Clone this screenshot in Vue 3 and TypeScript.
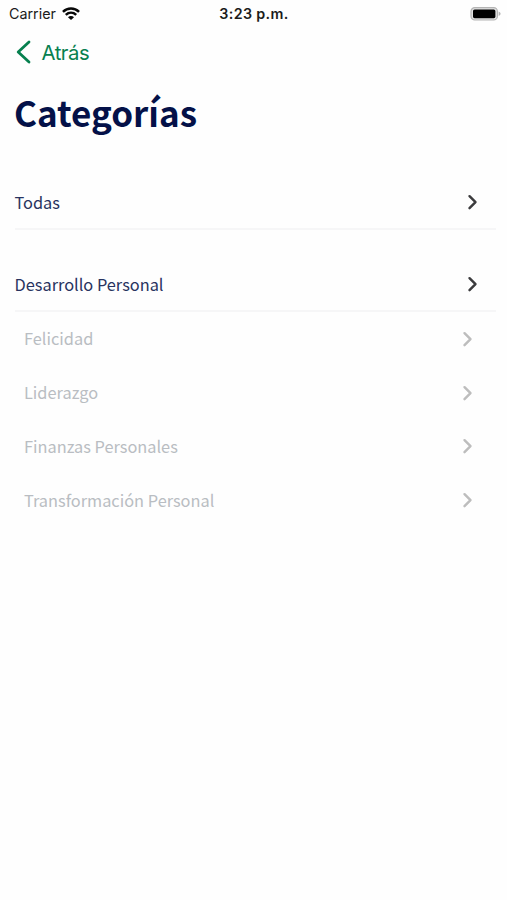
<script setup lang="ts">
interface Category {
  name: string
  kind: 'all' | 'parent' | 'child'
}

const categories: Category[] = [
  { name: 'Todas', kind: 'all' },
  { name: 'Desarrollo Personal', kind: 'parent' },
  { name: 'Felicidad', kind: 'child' },
  { name: 'Liderazgo', kind: 'child' },
  { name: 'Finanzas Personales', kind: 'child' },
  { name: 'Transformación Personal', kind: 'child' },
]
</script>

<template>
  <main class="screen">
    <header class="status">
      <div class="carrier">
        <span>Carrier</span>
        <svg class="wifi" width="18" height="14" viewBox="0 0 19 14" fill="none" stroke="#080808" stroke-width="2.6">
          <path d="M1 4.8C5.8.1 13.2.1 18 4.8" />
          <path d="M4 8c3.2-3 7.8-3 11 0" />
          <path d="M9.5 13.4 6.3 10.3c1.8-1.7 4.6-1.7 6.4 0z" fill="#080808" stroke="none" />
        </svg>
      </div>
      <span class="time">3:23 p.m.</span>
      <div class="power">
        <svg width="32" height="14" viewBox="0 0 32 14">
          <rect x="1" y=".6" width="26.4" height="12.4" rx="3.8" fill="#e2e2e2" stroke="#b4b4b4" stroke-width="1.2" />
          <rect x="3" y="2.4" width="22.4" height="8.8" rx="1.6" fill="#000" />
          <path d="M28.6 4.6q2 .8 2 2.2t-2 2.2z" fill="#b4b4b4" />
        </svg>
      </div>
    </header>
    <nav class="nav">
      <a class="back">
        <svg width="16" height="24" viewBox="0 0 16 24" fill="none" stroke="#07804f" stroke-width="2.8" stroke-linecap="round" stroke-linejoin="round">
          <path d="M14 2 3.2 12 14 22" />
        </svg>
        <span>Atrás</span>
      </a>
    </nav>
    <h1 class="title">Categorías</h1>
    <ul class="list">
      <li v-for="item in categories" :key="item.name" class="row" :class="item.kind">
        <span class="label">{{ item.name }}</span>
        <svg class="chevron" width="12" height="18" viewBox="0 0 12 18" fill="none" stroke="currentColor" stroke-width="2.4" stroke-linecap="round" stroke-linejoin="round">
          <path d="m2.5 3.2 6 6-6 6" />
        </svg>
      </li>
    </ul>
  </main>
</template>

<style>
body {
  margin: 0;
  background: #fefefe;
}
</style>

<style scoped>
.screen {
  box-sizing: border-box;
  height: 900px;
  background: #fefefe;
  overflow: hidden;
  font-family: "Noto Sans CJK SC", "Noto Sans", sans-serif;
}
.status {
  display: grid;
  grid-template-columns: 1fr auto 1fr;
  align-items: center;
  height: 27px;
  padding: 0 5px 0 9px;
  font: 14.3px/27px Inter, sans-serif;
  color: #1b1b1b;
}
.carrier {
  display: flex;
  align-items: center;
  gap: 6px;
}
.time {
  margin-right: 3px;
  font-weight: 600;
  letter-spacing: 0.35px;
}
.power {
  display: flex;
  justify-content: flex-end;
}
.nav {
  display: flex;
  align-items: center;
  height: 50px;
  padding-left: 15px;
}
.back {
  display: flex;
  align-items: center;
  gap: 10.5px;
  font: 20.3px/50px Inter, sans-serif;
  letter-spacing: -0.45px;
  color: #07804f;
}
.back span {
  padding-top: 1px;
}
.title {
  margin: 5px 0 0 14px;
  font-size: 35px;
  line-height: 60px;
  font-weight: 700;
  color: #041148;
}
.list {
  margin: 34px 0 0;
  padding: 0 11px 0 15px;
  list-style: none;
}
.row {
  box-sizing: border-box;
  display: flex;
  align-items: center;
  justify-content: space-between;
  height: 54px;
  font-size: 16.35px;
}
.label {
  padding-bottom: 1px;
}
.all,
.parent {
  padding-right: 17px;
  border-bottom: 2px solid #f6f6f7;
  color: #28335f;
}
.all .label,
.parent .label {
  margin-left: -0.5px;
}
.parent {
  margin-top: 28px;
}
.child {
  height: 53.8px;
  padding: 0 22px 0 9px;
  color: #b9bdc2;
}
.chevron {
  color: #3b3b3d;
}
.child .chevron {
  color: #bdbdbd;
}
</style>
